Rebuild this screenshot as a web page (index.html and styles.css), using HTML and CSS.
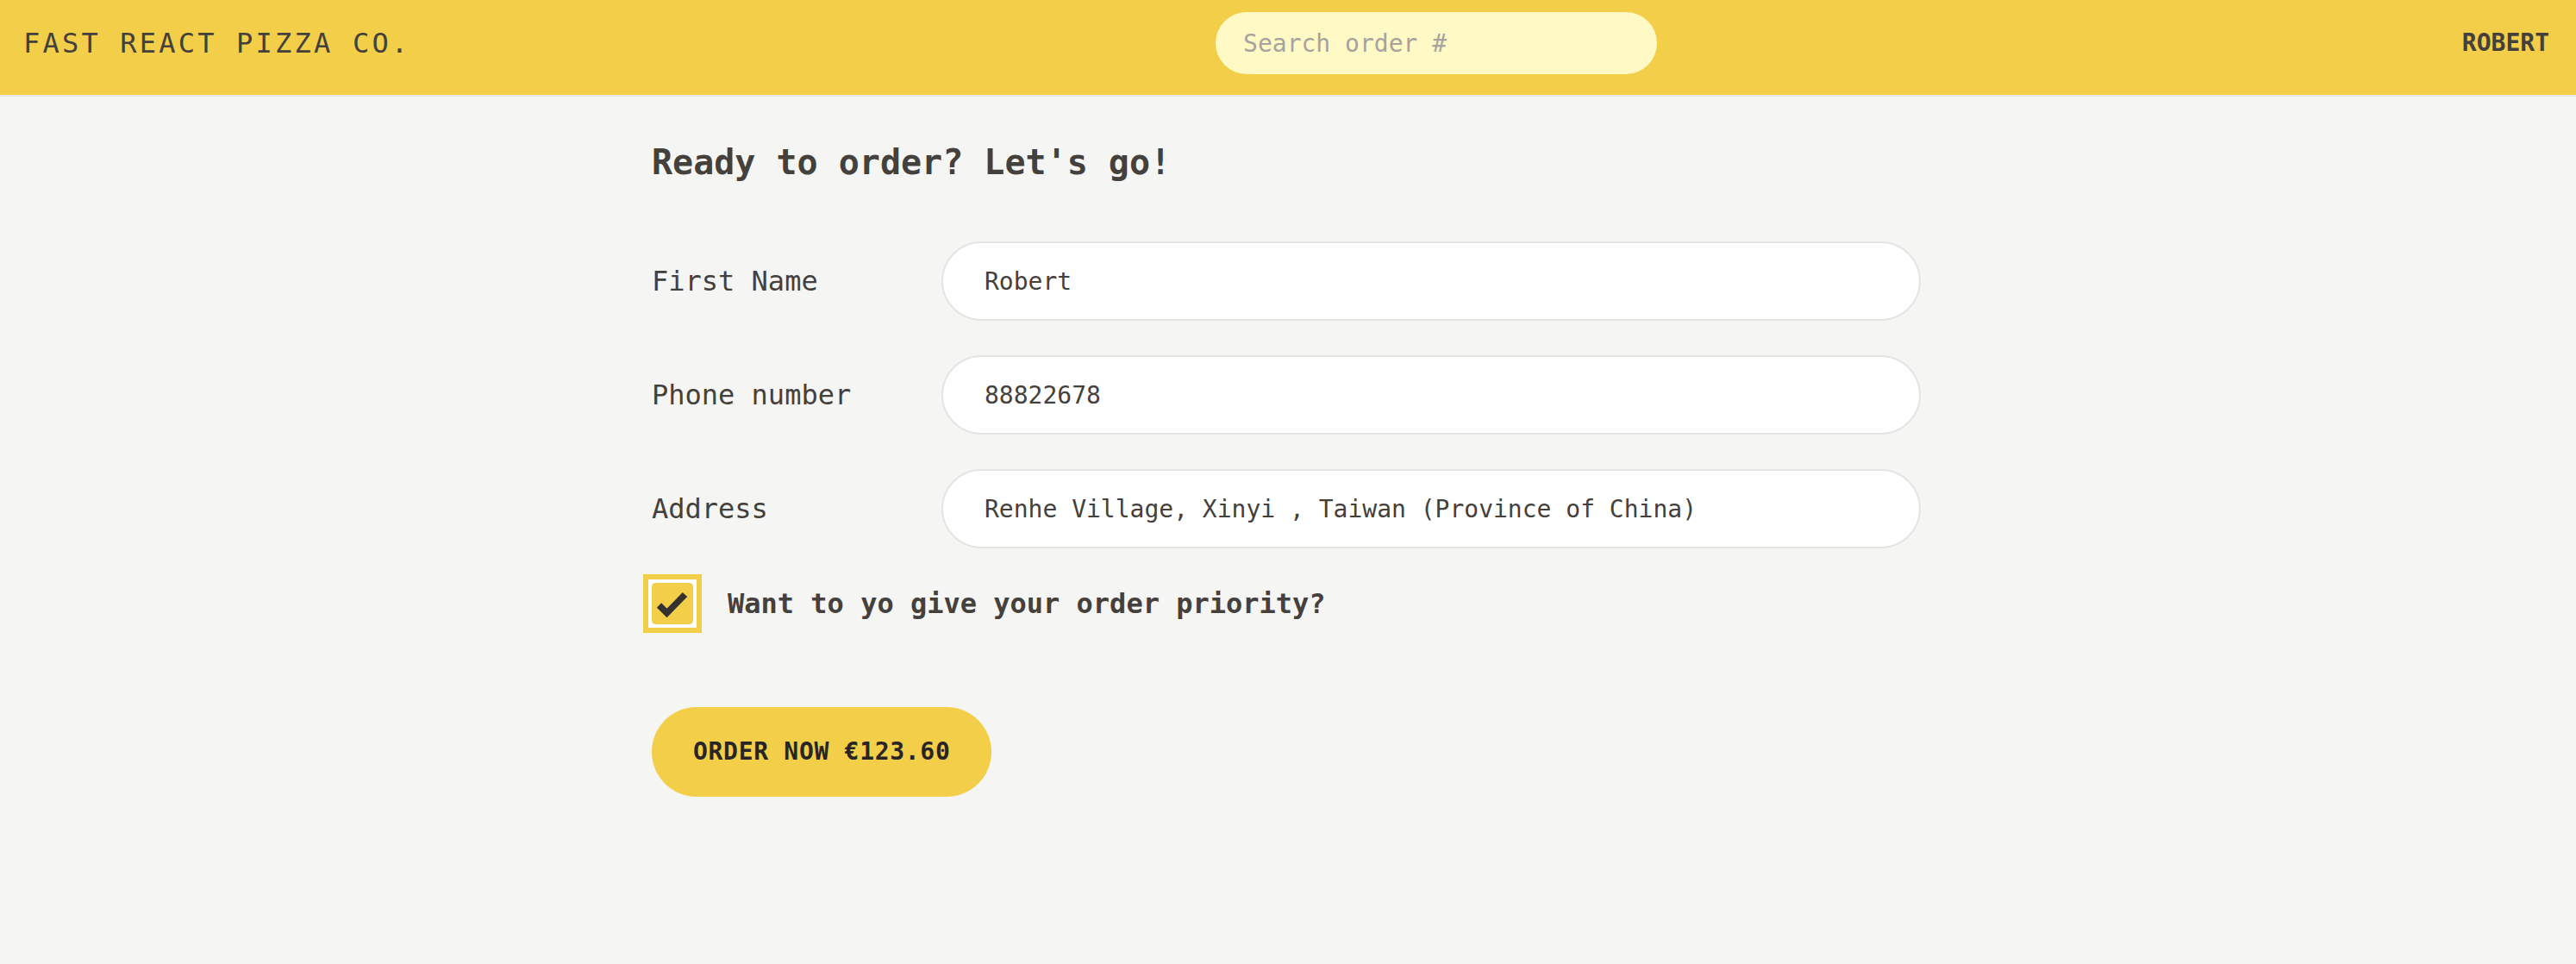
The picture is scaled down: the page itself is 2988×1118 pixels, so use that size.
FILE: index.html
```html
<!DOCTYPE html>
<html lang="en">
<head>
<meta charset="utf-8">
<title>Fast React Pizza Co.</title>
<link rel="stylesheet" href="styles.css">
</head>
<body>
<header class="header">
  <a class="logo" href="#">Fast React Pizza Co.</a>
  <form class="search">
    <input class="search-input" type="text" placeholder="Search order #">
  </form>
  <div class="username">Robert</div>
</header>
<main class="main">
  <div class="container">
    <h2 class="title">Ready to order? Let's go!</h2>
    <form class="order-form">
      <div class="row">
        <label class="row-label">First Name</label>
        <input class="input" type="text" value="Robert">
      </div>
      <div class="row">
        <label class="row-label">Phone number</label>
        <input class="input" type="tel" value="88822678">
      </div>
      <div class="row">
        <label class="row-label">Address</label>
        <input class="input" type="text" value="Renhe Village, Xinyi , Taiwan (Province of China)">
      </div>
      <div class="priority">
        <span class="checkbox">
          <svg width="48" height="48" viewBox="0 0 48 48" aria-hidden="true">
            <rect width="48" height="48" rx="4.5" fill="#f3ce49"/>
            <polyline points="8.5,26 17.5,35 38.5,13.5" fill="none" stroke="#333231" stroke-width="7.5"/>
          </svg>
        </span>
        <label class="priority-label">Want to yo give your order priority?</label>
      </div>
      <button class="btn" type="button">Order now €123.60</button>
    </form>
  </div>
</main>
</body>
</html>
```

FILE: styles.css
```css
* {
  box-sizing: border-box;
  margin: 0;
  padding: 0;
}

body {
  background: #f5f5f4;
  color: #44403c;
  font-family: "DejaVu Sans Mono", "Liberation Mono", monospace;
}

.header {
  display: flex;
  align-items: center;
  justify-content: space-between;
  background: #f3ce49;
  padding: 14px 31px 24px 27px;
  border-bottom: 2px solid #e7e5e4;
}

.logo {
  font-size: 32px;
  line-height: 48px;
  letter-spacing: 0.1em;
  text-transform: uppercase;
  color: #44403c;
  text-decoration: none;
}

.search-input {
  display: block;
  width: 512px;
  height: 72px;
  border: none;
  border-radius: 9999px;
  background: #fef9c5;
  padding: 0 32px;
  font-family: inherit;
  font-size: 28px;
  color: #44403c;
  outline: none;
}

.search-input::placeholder {
  color: #a8a29e;
}

.username {
  font-size: 28px;
  line-height: 40px;
  font-weight: 600;
  text-transform: uppercase;
  color: #44403c;
}

.container {
  width: 1540px;
  margin: 0 auto;
  padding: 48px 36px 48px 32px;
}

.title {
  font-size: 40px;
  line-height: 56px;
  font-weight: 600;
  margin-bottom: 64px;
}

.row {
  display: flex;
  align-items: center;
  gap: 16px;
  margin-bottom: 40px;
}

.row-label {
  flex: 0 0 320px;
  font-size: 32px;
  line-height: 48px;
}

.input {
  flex-grow: 1;
  height: 92px;
  border: 2px solid #e7e5e4;
  border-radius: 9999px;
  background: #fff;
  padding: 0 48px;
  font-family: inherit;
  font-size: 28px;
  color: #44403c;
  outline: none;
}

.priority {
  display: flex;
  align-items: center;
  gap: 40px;
  margin-bottom: 96px;
}

.checkbox {
  display: block;
  width: 48px;
  height: 48px;
  background: #fff;
  box-shadow: 0 0 0 4px #fff, 0 0 0 10px #f3ce49;
}

.checkbox svg {
  display: block;
}

.priority-label {
  font-size: 32px;
  line-height: 48px;
  font-weight: 600;
}

.btn {
  display: inline-block;
  background: #f3ce49;
  border: none;
  border-radius: 9999px;
  padding: 32px 48px;
  font-family: inherit;
  font-size: 28px;
  line-height: 40px;
  font-weight: 600;
  letter-spacing: 0.025em;
  text-transform: uppercase;
  color: #292524;
}
```
